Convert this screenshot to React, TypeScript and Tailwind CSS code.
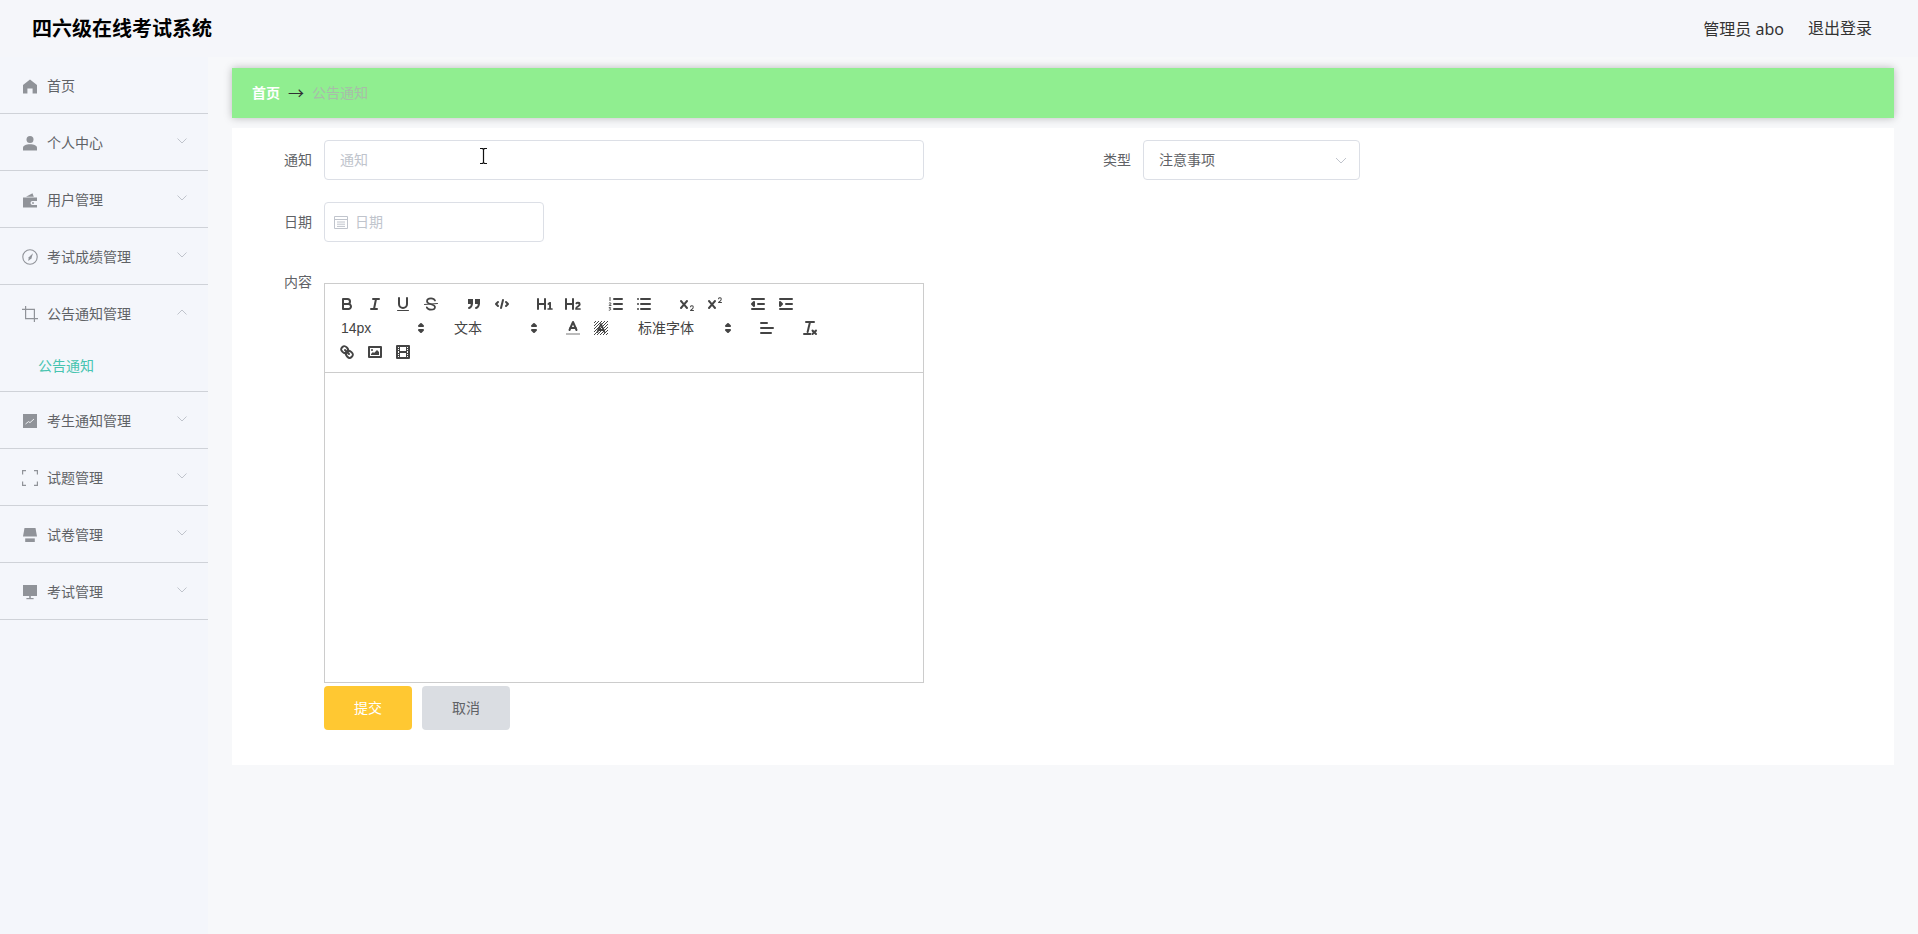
import type { ReactNode } from "react";

const S = { stroke: "#444", strokeWidth: 2, strokeLinecap: "round" as const, strokeLinejoin: "round" as const, fill: "none" };
const T = { stroke: "#444", strokeWidth: 1, strokeLinecap: "round" as const, strokeLinejoin: "round" as const, fill: "none" };
const F = { fill: "#444" };

const Ql = ({ children }: { children: ReactNode }) => (
  <button className="flex h-[24px] w-[28px] items-center justify-center px-[5px] py-[3px]">
    <svg viewBox="0 0 18 18" className="h-[18px] w-[18px]">
      {children}
    </svg>
  </button>
);

const Picker = ({ label, width }: { label: string; width: string }) => (
  <div className={`relative flex h-[24px] items-center pl-[8px] text-[14px] text-[#444] ${width}`}>
    {label}
    <svg viewBox="0 0 18 18" className="absolute right-[1px] top-[3px] h-[18px] w-[18px]">
      <polygon points="7 11 9 13 11 11 7 11" fill="#444" stroke="#444" strokeWidth="2" strokeLinejoin="round" />
      <polygon points="7 7 9 5 11 7 7 7" fill="#444" stroke="#444" strokeWidth="2" strokeLinejoin="round" />
    </svg>
  </div>
);

const X_PATH =
  "M9.651,5.241a1,1,0,0,0-1.41.108L6,7.964,3.759,5.349a1,1,0,1,0-1.519,1.3L4.683,9.5,2.241,12.35a1,1,0,1,0,1.519,1.3L6,11.036l2.241,2.615a1,1,0,0,0,1.519-1.3L7.317,9.5,9.759,6.651A1,1,0,0,0,9.651,5.241Z";

const Toolbar = () => (
  <div className="flex h-[89px] flex-wrap content-start border-b border-[#ccc] p-[8px]">
    <div className="mr-[15px] flex">
      <Ql>
        <path {...S} d="M5,4H9.5A2.5,2.5,0,0,1,12,6.5v0A2.5,2.5,0,0,1,9.5,9H5V4Z" />
        <path {...S} d="M5,9h5.5A2.5,2.5,0,0,1,13,11.5v0A2.5,2.5,0,0,1,10.5,14H5V9Z" />
      </Ql>
      <Ql>
        <line {...S} x1="7" x2="13" y1="4" y2="4" />
        <line {...S} x1="5" x2="11" y1="14" y2="14" />
        <line {...S} x1="8" x2="10" y1="14" y2="4" />
      </Ql>
      <Ql>
        <path {...S} d="M5,3V9a4,4,0,0,0,4,4h0a4,4,0,0,0,4-4V3" />
        <rect {...F} x="3" y="15" width="12" height="1" rx=".5" />
      </Ql>
      <Ql>
        <line {...T} x1="15.5" x2="2.5" y1="8.5" y2="9.5" />
        <path {...S} strokeWidth="1.7" d="M13,5.5C12.3,4,10.8,3.4,9,3.4C6.8,3.4,5,4.5,5,6.3C5,10,13,8.5,13,12C13,13.8,11.2,14.7,9,14.7C7,14.7,5.5,14,4.8,12.4" />
      </Ql>
    </div>
    <div className="mr-[15px] flex">
      <Ql>
        <rect {...F} stroke="#444" strokeWidth="2" x="4" y="5" width="3" height="3" />
        <rect {...F} stroke="#444" strokeWidth="2" x="11" y="5" width="3" height="3" />
        <path {...S} d="M7,8c0,4.031-3,5-3,5" />
        <path {...S} d="M14,8c0,4.031-3,5-3,5" />
      </Ql>
      <Ql>
        <polyline {...S} points="5 7 3 9 5 11" />
        <polyline {...S} points="13 7 15 9 13 11" />
        <line {...S} x1="10" x2="8" y1="5" y2="13" />
      </Ql>
    </div>
    <div className="mr-[15px] flex">
      <Ql>
        <path {...F} d="M10,4V14a1,1,0,0,1-2,0V10H3v4a1,1,0,0,1-2,0V4A1,1,0,0,1,3,4V8H8V4a1,1,0,0,1,2,0Zm6.06787,9.209H14.98975V7.59863a.54085.54085,0,0,0-.605-.60547h-.62744a1.01119,1.01119,0,0,0-.748.29688L11.645,8.56641a.5435.5435,0,0,0-.022.8584l.28613.30762a.53861.53861,0,0,0,.84717.0332l.09912-.08789a1.2137,1.2137,0,0,0,.2417-.35254h.02246s-.01123.30859-.01123.60547V13.209H12.041a.54085.54085,0,0,0-.605.60547v.43945a.54085.54085,0,0,0,.605.60547h4.02686a.54085.54085,0,0,0,.605-.60547v-.43945A.54085.54085,0,0,0,16.06787,13.209Z" />
      </Ql>
      <Ql>
        <path {...F} d="M16.73975,13.81445v.43945a.54085.54085,0,0,1-.605.60547H11.855a.58392.58392,0,0,1-.64893-.60547V14.0127c0-2.90527,3.39941-3.42187,3.39941-4.55469a.77675.77675,0,0,0-.84717-.78125,1.17684,1.17684,0,0,0-.83594.38477c-.2749.26367-.561.374-.85791.13184l-.4292-.34082c-.30811-.24219-.38525-.51758-.1543-.81445a2.97155,2.97155,0,0,1,2.45361-1.17676,2.45393,2.45393,0,0,1,2.68408,2.40918c0,2.45312-3.1792,2.92676-3.28906,3.93848h2.79443A.54085.54085,0,0,1,16.73975,13.81445ZM9,3A.99974.99974,0,0,0,8,4V8H3V4A1,1,0,0,0,1,4V14a1,1,0,0,0,2,0V10H8v4a1,1,0,0,0,2,0V4A.99974.99974,0,0,0,9,3Z" />
      </Ql>
    </div>
    <div className="mr-[15px] flex">
      <Ql>
        <line {...S} x1="7" x2="15" y1="4" y2="4" />
        <line {...S} x1="7" x2="15" y1="9" y2="9" />
        <line {...S} x1="7" x2="15" y1="14" y2="14" />
        <line {...T} x1="3" x2="3" y1="2.5" y2="5.5" />
        <path {...T} d="M2.2,8C3,7.4,4,7.8,3.8,8.6C3.6,9.3,2.5,9.7,2.2,10.4H4" />
        <path {...T} d="M2.2,12.7H3.6L2.9,13.8C3.9,13.8,4,15.4,2.2,15.2" />
      </Ql>
      <Ql>
        <line {...S} x1="6" x2="15" y1="4" y2="4" />
        <line {...S} x1="6" x2="15" y1="9" y2="9" />
        <line {...S} x1="6" x2="15" y1="14" y2="14" />
        <line {...S} x1="3" x2="3" y1="4" y2="4" />
        <line {...S} x1="3" x2="3" y1="9" y2="9" />
        <line {...S} x1="3" x2="3" y1="14" y2="14" />
      </Ql>
    </div>
    <div className="mr-[15px] flex">
      <Ql>
        <path {...F} d="M15.5,15H13.861a3.858,3.858,0,0,0,1.914-2.975,1.8,1.8,0,0,0-1.6-1.751A1.921,1.921,0,0,0,12.021,11.7a0.50013,0.50013,0,1,0,.957.291h0a0.914,0.914,0,0,1,1.053-.725,0.81,0.81,0,0,1,.744.762c0,1.076-1.16971,1.86982-1.93971,2.43082A1.45639,1.45639,0,0,0,12,15.5a0.5,0.5,0,0,0,.5.5h3A0.5,0.5,0,0,0,15.5,15Z" />
        <path {...F} d={X_PATH} />
      </Ql>
      <Ql>
        <path {...F} d="M15.5,7H13.861a4.015,4.015,0,0,0,1.914-2.975,1.8,1.8,0,0,0-1.6-1.751A1.922,1.922,0,0,0,12.021,3.7a0.5,0.5,0,1,0,.957.291,0.917,0.917,0,0,1,1.053-.725,0.81,0.81,0,0,1,.744.762c0,1.077-1.164,1.925-1.934,2.486A1.423,1.423,0,0,0,12,7.5a0.5,0.5,0,0,0,.5.5h3A0.5,0.5,0,0,0,15.5,7Z" />
        <path {...F} d={X_PATH} />
      </Ql>
    </div>
    <div className="mr-[15px] flex">
      <Ql>
        <line {...S} x1="3" x2="15" y1="14" y2="14" />
        <line {...S} x1="3" x2="15" y1="4" y2="4" />
        <line {...S} x1="9" x2="15" y1="9" y2="9" />
        <polygon {...F} stroke="#444" strokeWidth="2" strokeLinejoin="round" points="5 7 5 11 3 9 5 7" />
      </Ql>
      <Ql>
        <line {...S} x1="3" x2="15" y1="14" y2="14" />
        <line {...S} x1="3" x2="15" y1="4" y2="4" />
        <line {...S} x1="9" x2="15" y1="9" y2="9" />
        <polygon {...F} stroke="#444" strokeWidth="2" strokeLinejoin="round" points="3 7 3 11 5 9 3 7" />
      </Ql>
    </div>

    <div className="mr-[15px] flex">
      <Picker label="14px" width="w-[98px]" />
    </div>
    <div className="mr-[15px] flex">
      <Picker label="文本" width="w-[98px]" />
    </div>
    <div className="mr-[15px] flex">
      <Ql>
        <line {...S} stroke="#bbb" strokeLinecap="square" x1="3" x2="15" y1="15" y2="15" />
        <polyline {...S} points="5.5 11 9 3 12.5 11" />
        <line {...S} x1="11.63" x2="6.38" y1="9" y2="9" />
      </Ql>
      <Ql>
        <defs>
          <pattern id="hatch" width="3" height="3" patternUnits="userSpaceOnUse">
            <path d="M0 3 3 0M-1 1 1 -1M2 4 4 2" stroke="#444" strokeWidth="1" />
          </pattern>
        </defs>
        <rect x="2" y="2" width="14" height="14" fill="url(#hatch)" />
        <polyline {...S} strokeWidth="1.8" points="5.5 13 9 5 12.5 13" />
        <line {...S} strokeWidth="1.8" x1="11.6" x2="6.4" y1="11" y2="11" />
      </Ql>
    </div>
    <div className="mr-[15px] flex">
      <Picker label="标准字体" width="w-[108px]" />
    </div>
    <div className="mr-[15px] flex">
      <Ql>
        <line {...S} x1="3" x2="15" y1="9" y2="9" />
        <line {...S} x1="3" x2="13" y1="14" y2="14" />
        <line {...S} x1="3" x2="9" y1="4" y2="4" />
      </Ql>
    </div>
    <div className="mr-[15px] flex">
      <Ql>
        <line {...S} x1="5" x2="13" y1="3" y2="3" />
        <line {...S} x1="3" x2="9.4" y1="15" y2="15" />
        <line {...S} x1="9" x2="6.6" y1="3" y2="13" />
        <line {...S} x1="11.5" x2="15" y1="11.5" y2="15" />
        <line {...S} x1="15" x2="11.5" y1="11.5" y2="15" />
      </Ql>
    </div>
    <div className="mr-[15px] flex">
      <Ql>
        <line {...S} x1="7" x2="11" y1="7" y2="11" />
        <path {...S} d="M8.9,4.577a3.476,3.476,0,0,1,.36,4.679A3.476,3.476,0,0,1,4.577,8.9C3.185,7.5,2.035,6.4,4.217,4.217S7.5,3.185,8.9,4.577Z" />
        <path {...S} d="M13.423,9.1a3.476,3.476,0,0,0-4.679-.36,3.476,3.476,0,0,0,.36,4.679c1.392,1.392,2.5,2.542,4.679.36S14.815,10.5,13.423,9.1Z" />
      </Ql>
      <Ql>
        <rect {...S} x="3" y="4" width="12" height="10" />
        <circle {...F} cx="6" cy="7" r="1" />
        <polyline {...F} points="5 12 5 11 7 9 8 10 11 7 13 9 13 12 5 12" />
      </Ql>
      <Ql>
        <rect {...S} x="3" y="3" width="12" height="12" />
        <rect {...F} x="5" y="3" width="1" height="12" />
        <rect {...F} x="12" y="3" width="1" height="12" />
        <rect {...F} x="5" y="8" width="8" height="2" />
        <rect {...F} x="3" y="5" width="3" height="1" />
        <rect {...F} x="3" y="7" width="3" height="1" />
        <rect {...F} x="3" y="10" width="3" height="1" />
        <rect {...F} x="3" y="12" width="3" height="1" />
        <rect {...F} x="12" y="5" width="3" height="1" />
        <rect {...F} x="12" y="7" width="3" height="1" />
        <rect {...F} x="12" y="10" width="3" height="1" />
        <rect {...F} x="12" y="12" width="3" height="1" />
      </Ql>
    </div>
  </div>
);

const G = "#909399";

const menuIcons: Record<string, ReactNode> = {
  home: <path fill={G} d="M7 .4 14 6v8.4H9.6V9.6H4.4v4.8H0V6Z" />,
  user: (
    <>
      <circle cx="7" cy="3.6" r="3.5" fill={G} />
      <path fill={G} d="M0 14.4v-2.6C0 9.6 3 8.3 7 8.3s7 1.3 7 3.5v2.6Z" />
    </>
  ),
  wallet: (
    <>
      <path fill={G} d="M0 4.6h14V8H9.5a2 2 0 0 0 0 4H14v2.4H0Z" />
      <path fill={G} d="M3 3.8 9.5.2 10.8 3.8Z" />
      <circle cx="10" cy="10" r=".9" fill={G} />
    </>
  ),
  compass: (
    <>
      <circle cx="7" cy="7" r="7.2" fill="none" stroke={G} strokeWidth="1.1" />
      <path fill={G} d="M10 3.2 8.4 8.4 5.2 11 5.8 7.2Z" />
    </>
  ),
  crop: <path fill="none" stroke={G} strokeWidth="1.2" d="M2.6 -1v12.6H15M-1 2.4h12.4V15" />,
  chart: (
    <>
      <rect width="14" height="14" fill={G} />
      <path fill="none" stroke="#f5f7fb" strokeWidth=".9" d="M2.5 10 5.5 7.6 7 8.6 11 5" />
    </>
  ),
  full: <path fill="none" stroke={G} strokeWidth="1.2" d="M-.4 3.6V-.4H3M11 -.4h3.4v4M14.4 10.4v4H11M3 14.4H-.4v-4" />,
  shop: (
    <>
      <path fill={G} d="M1.5 0h11L14 8.6H0Z" />
      <path fill={G} d="M2.2 10.4h9.6v3.6H2.2Z" />
    </>
  ),
  monitor: (
    <>
      <rect width="14" height="11" fill={G} />
      <rect x="3.4" y="13" width="7.2" height="1.2" fill={G} />
      <rect x="6.2" y="11" width="1.6" height="2" fill={G} />
    </>
  ),
};

const Chevron = ({ up }: { up?: boolean }) => (
  <svg viewBox="0 0 10 6" className="h-[6px] w-[10px]">
    <path d={up ? "M.5 5.5 5 1l4.5 4.5" : "M.5.5 5 5 9.5.5"} fill="none" stroke="#c0c4cc" strokeWidth="1" />
  </svg>
);

const MenuItem = ({ icon, label, arrow = true, up, children }: { icon: string; label: string; arrow?: boolean; up?: boolean; children?: ReactNode }) => (
  <div className="border-b border-[#cfd2d8]">
    <div className="flex h-[56px] items-center pl-[23px] pr-[21px] pt-[2px]">
      <svg viewBox="0 0 14 14" className="mr-[10px] h-[14px] w-[14px] shrink-0 overflow-visible">
        {menuIcons[icon]}
      </svg>
      <span className="flex-1 text-[14px] text-[#606266]">{label}</span>
      {arrow ? (
        <span className="-mt-[5px] flex">
          <Chevron up={up} />
        </span>
      ) : null}
    </div>
    {children}
  </div>
);

const Sidebar = () => (
  <aside className="w-[208px] shrink-0 bg-[#f4f6fb]">
    <MenuItem icon="home" label="首页" arrow={false} />
    <MenuItem icon="user" label="个人中心" />
    <MenuItem icon="wallet" label="用户管理" />
    <MenuItem icon="compass" label="考试成绩管理" />
    <MenuItem icon="crop" label="公告通知管理" up>
      <div className="flex h-[50px] items-center pl-[38px] text-[14px] text-[#48c4b0]">公告通知</div>
    </MenuItem>
    <MenuItem icon="chart" label="考生通知管理" />
    <MenuItem icon="full" label="试题管理" />
    <MenuItem icon="shop" label="试卷管理" />
    <MenuItem icon="monitor" label="考试管理" />
  </aside>
);

const Label = ({ text }: { text: string }) => (
  <label className="mr-[12px] w-[80px] shrink-0 text-right text-[14px] leading-[40px] text-[#606266]">{text}</label>
);

const inputCls =
  "h-[40px] rounded-[4px] border border-[#dcdfe6] bg-white text-[14px] text-[#606266] outline-none placeholder:text-[#c0c4cc]";

const Form = () => (
  <form className="h-[637px] bg-white pt-[12px]">
    <div className="grid grid-cols-[819px_1fr]">
      <div className="flex">
        <Label text="通知" />
        <div className="relative">
          <input placeholder="通知" className={`${inputCls} w-[600px] px-[15px]`} />
          <svg viewBox="0 0 9 16" className="absolute left-[155px] top-[8px] h-[16px] w-[9px]">
            <path d="M1 .5h2.5l1 1 1-1H8M4.5 1.5v13M1 15.5h2.5l1-1 1 1H8" fill="none" stroke="#111" strokeWidth="1.2" />
          </svg>
        </div>
      </div>
      <div className="flex">
        <Label text="类型" />
        <div className={`${inputCls} flex w-[217px] items-center justify-between pl-[15px] pr-[12px] pt-[1px]`}>
          <span>注意事项</span>
          <svg viewBox="0 0 12 7" className="h-[7px] w-[12px]">
            <path d="M1 1l5 5 5-5" fill="none" stroke="#c0c4cc" strokeWidth="1" />
          </svg>
        </div>
      </div>
    </div>

    <div className="mt-[22px] flex">
      <Label text="日期" />
      <div className="relative">
        <input placeholder="日期" className={`${inputCls} w-[220px] pl-[30px] pr-[15px]`} />
        <svg viewBox="0 0 14 14" className="absolute left-[10px] top-[13px] h-[14px] w-[14px]">
          <path d="M.5 1.5h13v12H.5ZM.5 4.5h13M3 7h8M3 9.2h8M3 11.4h8" fill="none" stroke="#c0c4cc" strokeWidth="1" />
        </svg>
      </div>
    </div>

    <div className="mt-[20px] flex">
      <Label text="内容" />
      <div className="pt-[21px]">
        <div className="h-[400px] w-[600px] border border-[#ccc]">
          <Toolbar />
        </div>
        <div className="mt-[3px] flex gap-[10px]">
          <button type="button" className="h-[44px] w-[88px] rounded-[4px] bg-[#ffc832] text-[14px] text-white">提交</button>
          <button type="button" className="h-[44px] w-[88px] rounded-[4px] bg-[#dadde2] text-[14px] text-[#606266]">取消</button>
        </div>
      </div>
    </div>
  </form>
);

export default function App() {
  return (
    <div className="flex min-h-[934px] flex-col bg-[#f5f6fa] [font-family:'Liberation_Sans','Noto_Sans_CJK_SC',sans-serif]">
      <header className="flex h-[57px] items-center justify-between pl-[32px] pr-[46px]">
        <div className="text-[20px] font-bold text-black">四六级在线考试系统</div>
        <div className="flex gap-[24px] text-[16px] text-[#333]">
          <span className="[font-family:'Noto_Sans','Noto_Sans_CJK_SC',sans-serif]">管理员 abo</span>
          <span>退出登录</span>
        </div>
      </header>
      <div className="flex flex-1">
        <Sidebar />
        <main className="flex-1 bg-[#f7f8fa] px-[24px] pt-[11px]">
          <div className="mb-[10px] flex h-[50px] items-center bg-[#90ee90] pl-[20px] text-[14px] shadow-[0_0_8px_rgba(0,0,0,0.25)]">
            <span className="font-bold text-white">首页</span>
            <span className="mx-[8px] -mt-[2px] w-[16px] text-[16px] leading-none text-[#303133] [font-family:'Noto_Sans_CJK_SC',sans-serif]">→</span>
            <span className="text-[#a8bca9]">公告通知</span>
          </div>
          <Form />
        </main>
      </div>
    </div>
  );
}
